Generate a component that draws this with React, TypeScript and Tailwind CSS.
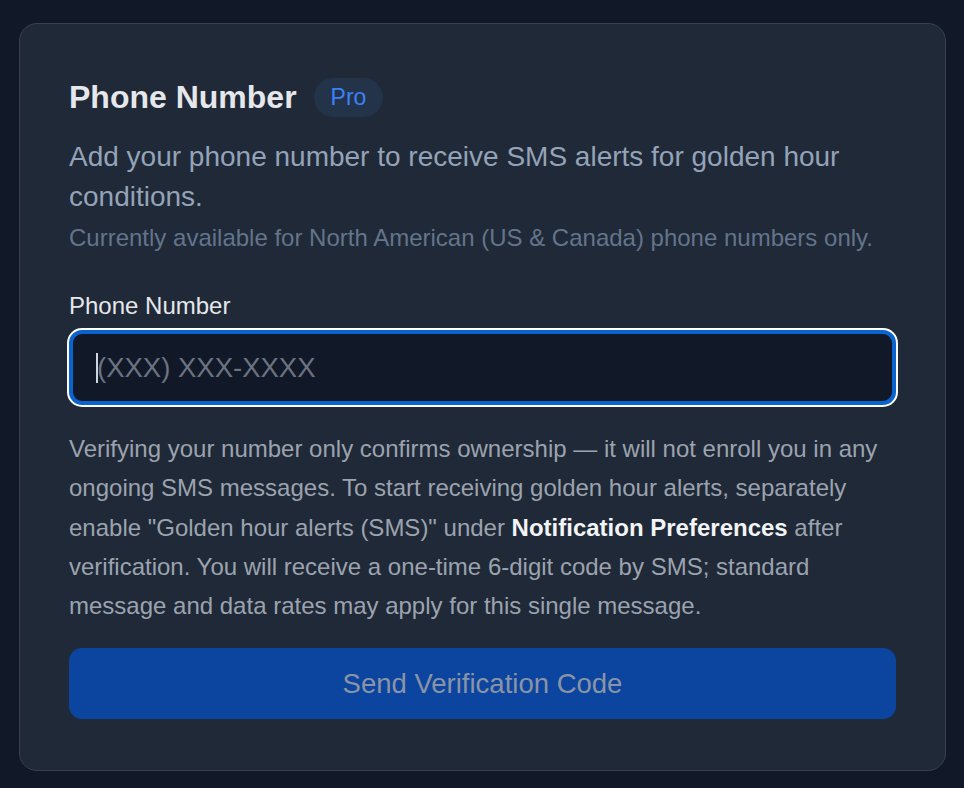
import React from 'react';

const App: React.FC = () => {
  return (
    <div className="min-h-screen bg-[#111827] pt-[23px] pl-[19px] font-['Liberation_Sans',Arial,sans-serif]">
      <div className="w-[927px] bg-[#1f2937] border border-[#374151] rounded-[18px] pt-[53px] pb-[51px] px-[49px]">
        {/* Encabezado */}
        <div className="flex items-center gap-[17px] h-[40px]">
          <h2 className="text-[32px] leading-[40px] font-bold text-[#e5e7eb]">Phone Number</h2>
          <span className="h-[39px] px-[17px] flex items-center rounded-full bg-[#23334a] text-[23px] text-[#3b82f6]">Pro</span>
        </div>

        <p className="mt-[20px] text-[28px] leading-[40px] text-[#94a3b8]">
          Add your phone number to receive SMS alerts for golden hour conditions.
        </p>
        <p className="mt-[5px] text-[24px] leading-[32px] text-[#64748b]">
          Currently available for North American (US &amp; Canada) phone numbers only.
        </p>

        {/* Campo */}
        <label className="block mt-[36px] text-[24px] leading-[32px] text-[#e5e7eb]">Phone Number</label>
        <div className="relative mt-[8px]">
          <input
            type="tel"
            placeholder="(XXX) XXX-XXXX"
            className="w-full h-[75px] bg-[#111827] border-4 border-[#0b63ce] rounded-[13px] shadow-[0_0_0_2px_#ffffff] pl-[24px] text-[27.5px] text-[#e5e7eb] placeholder:text-[#6b7280] outline-none"
          />
          <span className="absolute left-[27px] top-[23px] w-[1.5px] h-[30px] bg-[#d1d5db]" />
        </div>

        <p className="mt-[24px] text-[24px] leading-[39.3px] text-[#9ca3af]">
          Verifying your number only confirms ownership — it will not enroll you in any ongoing SMS messages. To start
          receiving golden hour alerts, separately enable "Golden hour alerts (SMS)" under{' '}
          <span className="font-bold text-[#f3f4f6]">Notification Preferences</span> after verification. You will receive a
          one-time 6-digit code by SMS; standard message and data rates may apply for this single message.
        </p>

        <button
          disabled
          className="mt-[23px] w-full h-[71px] rounded-[13px] bg-[#0c459f] text-[27.5px] text-[#8a94a6]"
        >
          Send Verification Code
        </button>
      </div>
    </div>
  );
};

export default App;
